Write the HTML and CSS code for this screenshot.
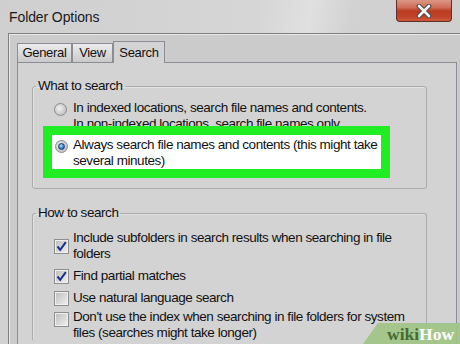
FILE: index.html
```html
<!DOCTYPE html>
<html>
	<head>
		<meta charset="UTF-8"/>
		<title>Folder Options</title>
		<link rel="stylesheet" href="styles.css">
	</head>
	<body>
		<div class="titlebar">
			<span class="title">Folder Options</span>
			<div class="close">
				<svg width="16" height="14" viewBox="0 0 16 14">
					<path d="M3 2 L13 12 M13 2 L3 12" stroke="#4a4a4a" stroke-width="4.6" stroke-linecap="round"/>
					<path d="M3 2 L13 12 M13 2 L3 12" stroke="#f4f4f4" stroke-width="2.6" stroke-linecap="round"/>
				</svg>
			</div>
		</div>

		<div class="frame">
			<!-- tabs -->
			<div class="tabs">
				<div class="tab tab-general">General</div>
				<div class="tab tab-view">View</div>
				<div class="tab tab-search tab-active">Search</div>
			</div>

			<div class="panel">
				<fieldset class="group group-what">
					<legend>What to search</legend>
					<div class="option option-first">
						<span class="radio"></span>
						<span class="label">In indexed locations, search file names and contents.<br/>In non-indexed locations, search file names only</span>
					</div>
					<div class="highlight">
						<div class="option">
							<span class="radio radio-on"></span>
							<span class="label">Always search file names and contents (this might take<br/>several minutes)</span>
						</div>
					</div>
				</fieldset>

				<fieldset class="group group-how">
					<legend>How to search</legend>
					<div class="check-row check-middle">
						<span class="checkbox checked"><svg width="13" height="13" viewBox="0 0 13 13"><path d="M2.5 6.5 L5.2 9.8 L10.8 2.2" fill="none" stroke="#1d2f86" stroke-width="2"/></svg></span>
						<span class="label">Include subfolders in search results when searching in file<br/>folders</span>
					</div>
					<div class="check-row check-middle">
						<span class="checkbox checked"><svg width="13" height="13" viewBox="0 0 13 13"><path d="M2.5 6.5 L5.2 9.8 L10.8 2.2" fill="none" stroke="#1d2f86" stroke-width="2"/></svg></span>
						<span class="label">Find partial matches</span>
					</div>
					<div class="check-row check-middle">
						<span class="checkbox"></span>
						<span class="label">Use natural language search</span>
					</div>
					<div class="check-row check-top">
						<span class="checkbox"></span>
						<span class="label">Don't use the index when searching in file folders for system<br/>files (searches might take longer)</span>
					</div>
				</fieldset>
			</div>
		</div>

		<div class="watermark"><span class="wiki">wiki</span><span class="how">How</span></div>
	</body>
</html>
```

FILE: styles.css
```css
body {
	margin: 0;
	width: 460px;
	height: 344px;
	overflow: hidden;
	position: relative;
	background: linear-gradient(100deg, #cfcfcf 0%, #d6d6d6 50%, #e0e0e0 60%, #d2d2d2 68%, #cdcdcd 100%);
	font: 13.5px "Liberation Sans", Arial, sans-serif;
	letter-spacing: -0.45px;
	color: #111;
}

.titlebar {
	height: 33px;
	display: flex;
	align-items: flex-start;
}
.title {
	margin: 9px 0 0 9px;
	font-size: 14px;
	line-height: 16px;
	letter-spacing: -0.1px;
	color: #1a1a1a;
}
.close {
	margin-left: auto;
	margin-right: 8px;
	width: 54px;
	height: 21px;
	border: 1px solid #5e3028;
	border-top: none;
	border-radius: 0 0 4px 4px;
	background: linear-gradient(#dc9886 0%, #cf6d58 35%, #b93b22 52%, #c0442a 80%, #cc5a3c 100%);
	display: flex;
	align-items: center;
	justify-content: center;
}

.frame {
	margin-left: 8px;
	width: 443px;
	height: 303px;
	overflow: hidden;
	border: 1px solid #7f7f7f;
	border-bottom: none;
	box-shadow: inset 1px 1px 0 #e8e8e8;
	background: #cbcbcb;
	padding: 7px 0 0 8px;
}

/* tabs */
.tabs {
	display: flex;
	align-items: flex-end;
	font-size: 13px;
	letter-spacing: -0.3px;
}
.tab {
	height: 18px;
	line-height: 18px;
	border: 1px solid #8b8d94;
	border-bottom: none;
	text-align: center;
	background: linear-gradient(#ececec, #cacaca);
	box-sizing: content-box;
}
.tab-general { width: 53px; }
.tab-view { width: 39px; }
.tab-search { width: 50px; }
.tab-active {
	height: 21px;
	line-height: 21px;
	margin-bottom: -1px;
	background: #d3d3d3;
	position: relative;
	z-index: 1;
}

.panel {
	width: 409px;
	height: 266px;
	overflow: hidden;
	border: 1px solid #8b8d94;
	border-bottom: none;
	background: #d3d3d3;
	padding: 15px 15px 0 14px;
}

.group {
	margin: 0;
	padding: 6px 0 10px 0;
	width: 393px;
	min-width: 0;
	border: 1px solid #ababab;
	border-radius: 3px;
	box-shadow: inset 1px 1px 0 #e2e2e2;
}
.group legend {
	margin-left: 3px;
	padding: 0 2px;
	line-height: 16px;
}
.group-how {
	margin-top: 16px;
	padding-top: 9px;
	padding-bottom: 0;
	border-bottom: none;
}

.label {
	line-height: 16px;
	white-space: nowrap;
}

.option {
	display: flex;
	align-items: flex-start;
}
.option-first {
	padding-left: 21px;
}
.radio {
	width: 11px;
	height: 11px;
	margin-top: 3px;
	margin-right: 6px;
	border: 1px solid #8a8a8a;
	border-radius: 50%;
	background: radial-gradient(circle at 40% 40%, #f2f2f2 0%, #c4c4c4 70%, #d8d8d8 100%);
	flex: none;
	display: flex;
	align-items: center;
	justify-content: center;
}
.radio-on::after {
	content: "";
	width: 7px;
	height: 7px;
	border-radius: 50%;
	border: 1px solid #1a3a66;
	background: radial-gradient(circle at 40% 35%, #bde6fb 0%, #3b8fd2 50%, #15508f 100%);
	box-sizing: border-box;
}

.highlight {
	margin: -6px 0 0 10px;
	width: 326px;
	border: 9px solid #20ee22;
	background: #fff;
	padding: 2px 0 0 3px;
	position: relative;
}
.highlight .radio {
	margin-right: 5px;
}

.check-row {
	display: flex;
	padding-left: 21px;
	margin-top: 6px;
}
.check-row:first-of-type {
	margin-top: 0;
}
.check-middle {
	align-items: center;
}
.check-top {
	align-items: flex-start;
	margin-top: 3px;
}
.check-top .checkbox {
	margin-top: 3px;
}
.checkbox {
	width: 13px;
	height: 13px;
	margin-right: 4px;
	border: 1px solid #8e8f8f;
	box-shadow: inset 0 0 0 1px #efefef;
	background: linear-gradient(135deg, #bcbcbc 0%, #dcdcdc 60%, #f0f0f0 100%);
	flex: none;
	display: flex;
	align-items: center;
	justify-content: center;
}
.checkbox svg {
	display: block;
}

.watermark {
	position: absolute;
	right: 0;
	bottom: 0;
	width: 73px;
	height: 21px;
	padding-left: 24px;
	background: rgba(160, 196, 134, 0.92);
	clip-path: polygon(15px 0, 100% 0, 100% 100%, 0 100%);
	font: bold 17.5px "Liberation Serif", "Times New Roman", serif;
	letter-spacing: 0;
	line-height: 22px;
}
.wiki { color: #456c33; }
.how { color: #fff; }
```
